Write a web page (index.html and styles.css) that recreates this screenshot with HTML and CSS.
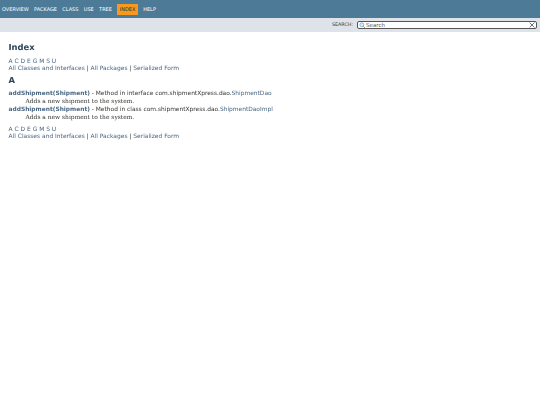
FILE: index.html
```html
<!DOCTYPE html>
<html lang="en">
<head>
  <meta charset="UTF-8">
  <title>Index</title>
  <link rel="stylesheet" href="styles.css">
</head>
<body>
  <header class="top-nav">
    <ul class="nav-list">
      <li>OVERVIEW</li>
      <li>PACKAGE</li>
      <li>CLASS</li>
      <li>USE</li>
      <li>TREE</li>
      <li class="current">INDEX</li>
      <li>HELP</li>
    </ul>
  </header>
  <div class="sub-nav">
    <label class="search-label" for="search">SEARCH:</label>
    <div class="search-box">
      <svg class="search-icon" viewBox="0 0 10 10" width="7" height="7">
        <circle cx="4" cy="4" r="2.8" fill="#dcebf5" stroke="#6f9fc0" stroke-width="1"/>
        <path d="M6 6 9.2 9.2" stroke="#7f8f9a" stroke-width="1.3"/>
      </svg>
      <input type="text" id="search" class="search-input" value="Search">
      <svg class="reset-icon" viewBox="0 0 10 10" width="6" height="6">
        <path d="M1 1 9 9M9 1 1 9" stroke="#555" stroke-width="1.4"/>
      </svg>
    </div>
  </div>
  <main class="content">
    <h1 class="title">Index</h1>
    <div class="letters"><a>A</a> <a>C</a> <a>D</a> <a>E</a> <a>G</a> <a>M</a> <a>S</a> <a>U</a></div>
    <div class="links"><a>All Classes and Interfaces</a> | <a>All Packages</a> | <a>Serialized Form</a></div>
    <h2 class="letter-head">A</h2>
    <dl class="index-list">
      <dt><a class="member">addShipment(Shipment)</a> - Method in interface com.shipmentXpress.dao.<a>ShipmentDao</a></dt>
      <dd>Adds a new shipment to the system.</dd>
      <dt><a class="member">addShipment(Shipment)</a> - Method in class com.shipmentXpress.dao.<a>ShipmentDaoImpl</a></dt>
      <dd>Adds a new shipment to the system.</dd>
    </dl>
    <div class="letters"><a>A</a> <a>C</a> <a>D</a> <a>E</a> <a>G</a> <a>M</a> <a>S</a> <a>U</a></div>
    <div class="links"><a>All Classes and Interfaces</a> | <a>All Packages</a> | <a>Serialized Form</a></div>
  </main>
</body>
</html>
```
FILE: styles.css
```css
body {
  margin: 0;
  background: #fff;
  color: #353833;
  font-family: "DejaVu Sans", sans-serif;
  font-size: 5.95px;
  text-rendering: geometricPrecision;
  filter: blur(0.35px);
  min-height: 100vh;
}

a {
  color: #4a6782;
}

.top-nav {
  height: 18px;
  box-sizing: border-box;
  padding-top: 1px;
  background: #4d7a97;
  display: flex;
  align-items: center;
}

.nav-list {
  list-style: none;
  margin: 0;
  padding: 0 0 0 2px;
  display: flex;
  align-items: center;
  gap: 5.3px;
  color: #fff;
  font-size: 5px;
}

.nav-list .current {
  background: #f8981d;
  color: #253441;
  padding: 2.5px 2.5px;
}

.sub-nav {
  height: 14px;
  background: #dee3e9;
  display: flex;
  justify-content: flex-end;
  align-items: center;
  gap: 4px;
  padding-right: 3px;
}

.search-label {
  font-size: 4.8px;
  color: #353833;
}

.search-box {
  width: 178px;
  height: 6px;
  display: flex;
  align-items: center;
  background: #fff;
  border: 1px solid #555;
  border-radius: 2px;
}

.search-icon {
  margin-left: 1px;
  flex: none;
}

.search-input {
  flex: 1;
  min-width: 0;
  border: none;
  padding: 0;
  font-family: "DejaVu Sans", sans-serif;
  font-size: 5.5px;
  height: 6px;
  color: #555;
  background: transparent;
  outline: none;
}

.reset-icon {
  margin-right: 1px;
  flex: none;
}

.content {
  padding: 0 8.5px;
}

.title {
  margin: 10px 0 6.2px;
  font-size: 8.4px;
  color: #2c4557;
  font-weight: bold;
}

.letters,
.links {
  line-height: 7px;
}

.letter-head {
  margin: 2.8px 0 6.5px;
  font-size: 8.4px;
  color: #2c4557;
}

.index-list {
  margin: 0 0 5px;
}

.index-list dt {
  font-size: 5.9px;
  line-height: 7px;
}

.member {
  font-weight: bold;
}

.index-list dd {
  margin: 0 0 2px 17px;
  font-family: "DejaVu Serif", serif;
  line-height: 7px;
}
```
